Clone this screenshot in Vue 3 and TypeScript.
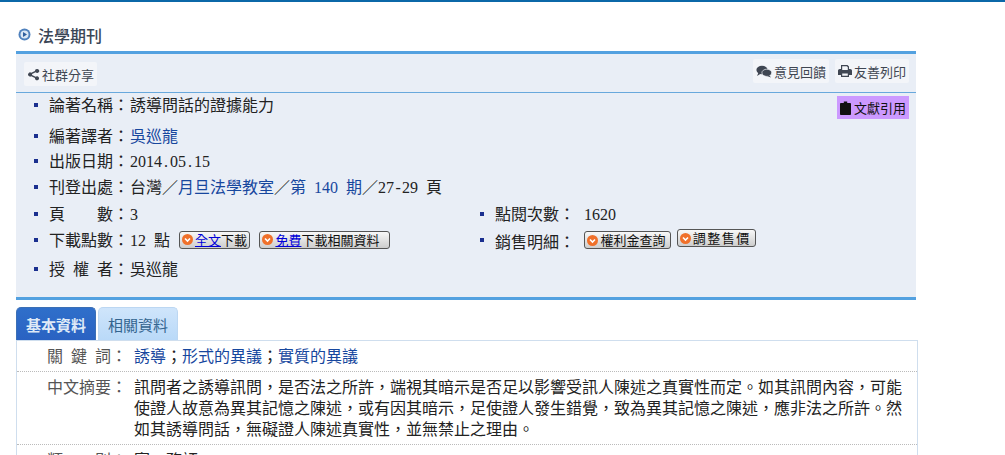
<script setup lang="ts">
const keywords = ['誘導', '形式的異議', '實質的異議']
</script>

<template>
  <div class="page">
    <div class="topbar"></div>
    <main class="wrap">
      <h2 class="title">
        <svg class="title-ico" width="13" height="13" viewBox="0 0 13 13">
          <circle cx="6.5" cy="6.5" r="6" fill="#4f81bd" />
          <circle cx="6.5" cy="6.5" r="4" fill="#dce8f5" />
          <path d="M5 3.900 9 6.500 5 9.100z" fill="#2f5f9e" />
        </svg>
        法學期刊
      </h2>
      <section class="panel">
        <div class="toolbar">
          <span class="tool low">
            <svg width="13" height="13" viewBox="0 0 14 14"><path d="M11 1a2.200 2.200 0 1 1-1.700 3.600L5.400 6.500a2 2 0 0 1 0 1l3.900 1.900a2.200 2.200 0 1 1-.7 1.300L4.600 8.800a2.200 2.200 0 1 1 0-3.600l4-1.900A2.200 2.200 0 0 1 11 1z" fill="#3f4652"/></svg>
            社群分享
          </span>
          <div class="tool-right">
            <span class="tool">
              <svg width="16" height="13" viewBox="0 0 16 13"><ellipse cx="6" cy="5" rx="5.600" ry="4.200" fill="#3f4652"/><path d="M2.500 7.500 1 11l4-2.500z" fill="#3f4652"/><ellipse cx="10.800" cy="7.800" rx="4.900" ry="3.600" fill="#3f4652" stroke="#f3f5f9" stroke-width=".7"/><path d="M13 10l2 2.500-4-1.500z" fill="#3f4652"/></svg>
              意見回饋
            </span>
            <span class="tool">
              <svg width="14" height="14" viewBox="0 0 14 14"><path fill-rule="evenodd" d="M3 1h6.500L11 2.500V5h1.200C13.200 5 14 5.800 14 6.800V11h-3v2H3v-2H0V6.800C0 5.800.8 5 1.800 5H3zm1.200 1.200V6h5.600V3.200L8.800 2.200zM4.200 9.500v2.300h5.600V9.500z" fill="#3f4652"/></svg>
              友善列印
            </span>
          </div>
        </div>
        <div class="info">
          <span class="cite">
            <svg width="11" height="14" viewBox="0 0 11 14"><path d="M1 2h2.800V.6h3.400V2H10c.6 0 1 .5 1 1v10c0 .5-.4 1-1 1H1c-.6 0-1-.5-1-1V3c0-.5.4-1 1-1z" fill="#111"/></svg>
            文獻引用
          </span>
          <div class="row r1"><span class="label">論著名稱：</span>誘導問話的證據能力</div>
          <div class="row r2"><span class="label">編著譯者：</span><a class="link">吳巡龍</a></div>
          <div class="row r3"><span class="label">出版日期：</span><span class="num">2014<span class="hc">.</span>05<span class="hc">.</span>15</span></div>
          <div class="row r4"><span class="label">刊登出處：</span>台灣／<a class="link">月旦法學教室</a>／<a class="link">第<span class="num"> 140 </span>期</a>／<span class="num">27<span class="hc">-</span>29 </span>頁</div>
          <div class="split r5">
            <div class="row"><span class="label">頁　　數：</span><span class="num">3</span></div>
            <div class="row"><span class="label">點閱次數：</span><span class="num val">1620</span></div>
          </div>
          <div class="split r6">
            <div class="row">
              <span class="label">下載點數：</span><span class="num">12 </span>點
              <span class="btn first">
                <svg class="dot" width="11" height="11" viewBox="0 0 11 11"><circle cx="5.500" cy="5.500" r="5.500" fill="#f0702a"/><path d="M3 4.500l2.500 2.500L8 4.500" fill="none" stroke="#fff" stroke-width="1.600"/></svg>
                <a class="blue">全文</a>下載
              </span>
              <span class="btn second">
                <svg class="dot" width="11" height="11" viewBox="0 0 11 11"><circle cx="5.500" cy="5.500" r="5.500" fill="#f0702a"/><path d="M3 4.500l2.500 2.500L8 4.500" fill="none" stroke="#fff" stroke-width="1.600"/></svg>
                <a class="blue">免費</a>下載相關資料
              </span>
            </div>
            <div class="row">
              <span class="label">銷售明細：</span>
              <span class="btn b1">
                <svg class="dot" width="11" height="11" viewBox="0 0 11 11"><circle cx="5.500" cy="5.500" r="5.500" fill="#f0702a"/><path d="M3 4.500l2.500 2.500L8 4.500" fill="none" stroke="#fff" stroke-width="1.600"/></svg>
                權利金查詢
              </span>
              <span class="btn b2">
                <svg class="dot" width="11" height="11" viewBox="0 0 11 11"><circle cx="5.500" cy="5.500" r="5.500" fill="#f0702a"/><path d="M3 4.500l2.500 2.500L8 4.500" fill="none" stroke="#fff" stroke-width="1.600"/></svg>
                調整售價
              </span>
            </div>
          </div>
          <div class="row r7"><span class="label spaced">授 權 者：</span>吳巡龍</div>
        </div>
      </section>
      <nav class="tabs">
        <span class="tab on">基本資料</span>
        <span class="tab">相關資料</span>
      </nav>
      <section class="detail">
        <div class="drow">
          <span class="dlabel spaced">關 鍵 詞：</span>
          <div class="dval">
            <template v-for="(k, i) in keywords" :key="k"><span v-if="i">；</span><a class="link">{{ k }}</a></template>
          </div>
        </div>
        <div class="drow">
          <span class="dlabel">中文摘要：</span>
          <div class="dval">訊問者之誘導訊問，是否法之所許，端視其暗示是否足以影響受訊人陳述之真實性而定。如其訊問內容，可能使證人故意為異其記憶之陳述，或有因其暗示，足使證人發生錯覺，致為異其記憶之陳述，應非法之所許。然如其誘導問話，無礙證人陳述真實性，並無禁止之理由。</div>
        </div>
        <div class="drow">
          <span class="dlabel">類　　別：</span>
          <div class="dval">實　務評</div>
        </div>
      </section>
    </main>
  </div>
</template>

<style>
html, body { margin: 0; background: #fff; overflow: hidden; }
</style>

<style scoped>
.page { height: 455px; overflow: hidden; font-family: "Noto Sans CJK TC", "Liberation Sans", sans-serif; color: #222; }
.topbar { height: 2px; background: #0b68a8; }
.wrap { width: 902px; margin-left: 16px; }
.title { margin: 0; height: 49px; padding: 16px 0 0 2px; box-sizing: border-box; display: flex; align-items: center; gap: 7px; font-size: 16px; font-weight: 500; color: #3a4656; line-height: 22px; }
.panel { width: 900px; height: 243px; background: #e9eef6; border-top: 3px solid #53a1e0; border-bottom: 3px solid #53a1e0; }
.toolbar { height: 39px; border-bottom: 1px solid #68a8dc; display: flex; justify-content: space-between; padding: 5px 7px 0 8px; box-sizing: border-box; }
.tool-right { display: flex; gap: 6px; }
.tool { height: 24px; display: inline-flex; align-items: center; gap: 2px; padding: 0 3px; background: #f3f5f9; border-radius: 2px; font-size: 13px; color: #3f4652; }
.tool.low { margin-top: 3px; }
.info { position: relative; padding-left: 18px; height: 204px; display: flow-root; }
.cite { position: absolute; right: 7px; top: 3px; height: 23px; padding: 0 3px; display: inline-flex; gap: 3px; align-items: center; background: #cc99ff; font-size: 13px; color: #111; }
.row { position: relative; height: 20px; font-size: 16px; line-height: 20px; padding-left: 15px; white-space: nowrap; color: #222; }
.row::before { content: ""; position: absolute; left: 0; top: 9px; width: 4px; height: 4px; background: #1a2f8f; }
.label { display: inline-block; width: 81px; }
.spaced { word-spacing: 4.400px; }
.num { font-family: "Liberation Serif", serif; font-size: 16px; white-space: pre; word-spacing: 4px; }
.hc { display: inline-block; width: 8px; text-align: center; }
.link { color: #17479e; text-decoration: none; }
.r1 { margin-top: 1px; }
.r2 { margin-top: 11px; }
.r3 { margin-top: 5px; }
.r4 { margin-top: 6px; }
.r5 { margin-top: 7px; }
.r6 { margin-top: 6px; }
.r7 { margin-top: 9px; }
.split { display: flex; }
.split > .row:first-child { width: 432px; box-sizing: border-box; flex: none; margin-right: 14px; }
.val { margin-left: 8px; }
.btn { display: inline-flex; align-items: center; height: 18px; box-sizing: border-box; padding: 0 2px 0 2px; border: 1px solid #555; border-radius: 3px; background: linear-gradient(#f8f8f8, #cdcdcd); font-size: 13px; line-height: 16px; color: #111; vertical-align: 1px; }
.first { margin-left: 5.400px; }
.second { margin-left: 9.400px; padding-right: 10px; }
.b1 { margin-left: 8.400px; padding-right: 5px; vertical-align: 2px; }
.b2 { margin-left: 5.400px; vertical-align: 4px; letter-spacing: 1.500px; padding-right: 4px; }
.dot { flex: none; margin-right: 2px; }
.blue { color: #0000d8; text-decoration: underline; }
.tabs { display: flex; gap: 2px; padding-top: 7px; height: 33px; }
.tab { width: 80px; height: 33px; box-sizing: border-box; display: flex; align-items: center; justify-content: center; background: linear-gradient(#cfe5fb, #b9d9f8); border: 1px solid #bcd7f2; border-bottom: 0; border-radius: 5px 5px 0 0; font-size: 15px; color: #33648f; }
.tab.on { background: linear-gradient(#2f6fca, #2a62c2); border-color: #3b6fb5; color: #dfeaf7; font-weight: 700; }
.detail { width: 900px; border: 1px solid #cfdeee; border-bottom: 0; }
.drow { display: flex; border-bottom: 1px dotted #bbb; padding: 4px 0 5px; font-size: 16px; line-height: 21px; }
.dlabel { width: 110px; text-align: right; flex: none; color: #555; }
.dval { margin-left: 7px; width: 770px; color: #222; }
</style>
